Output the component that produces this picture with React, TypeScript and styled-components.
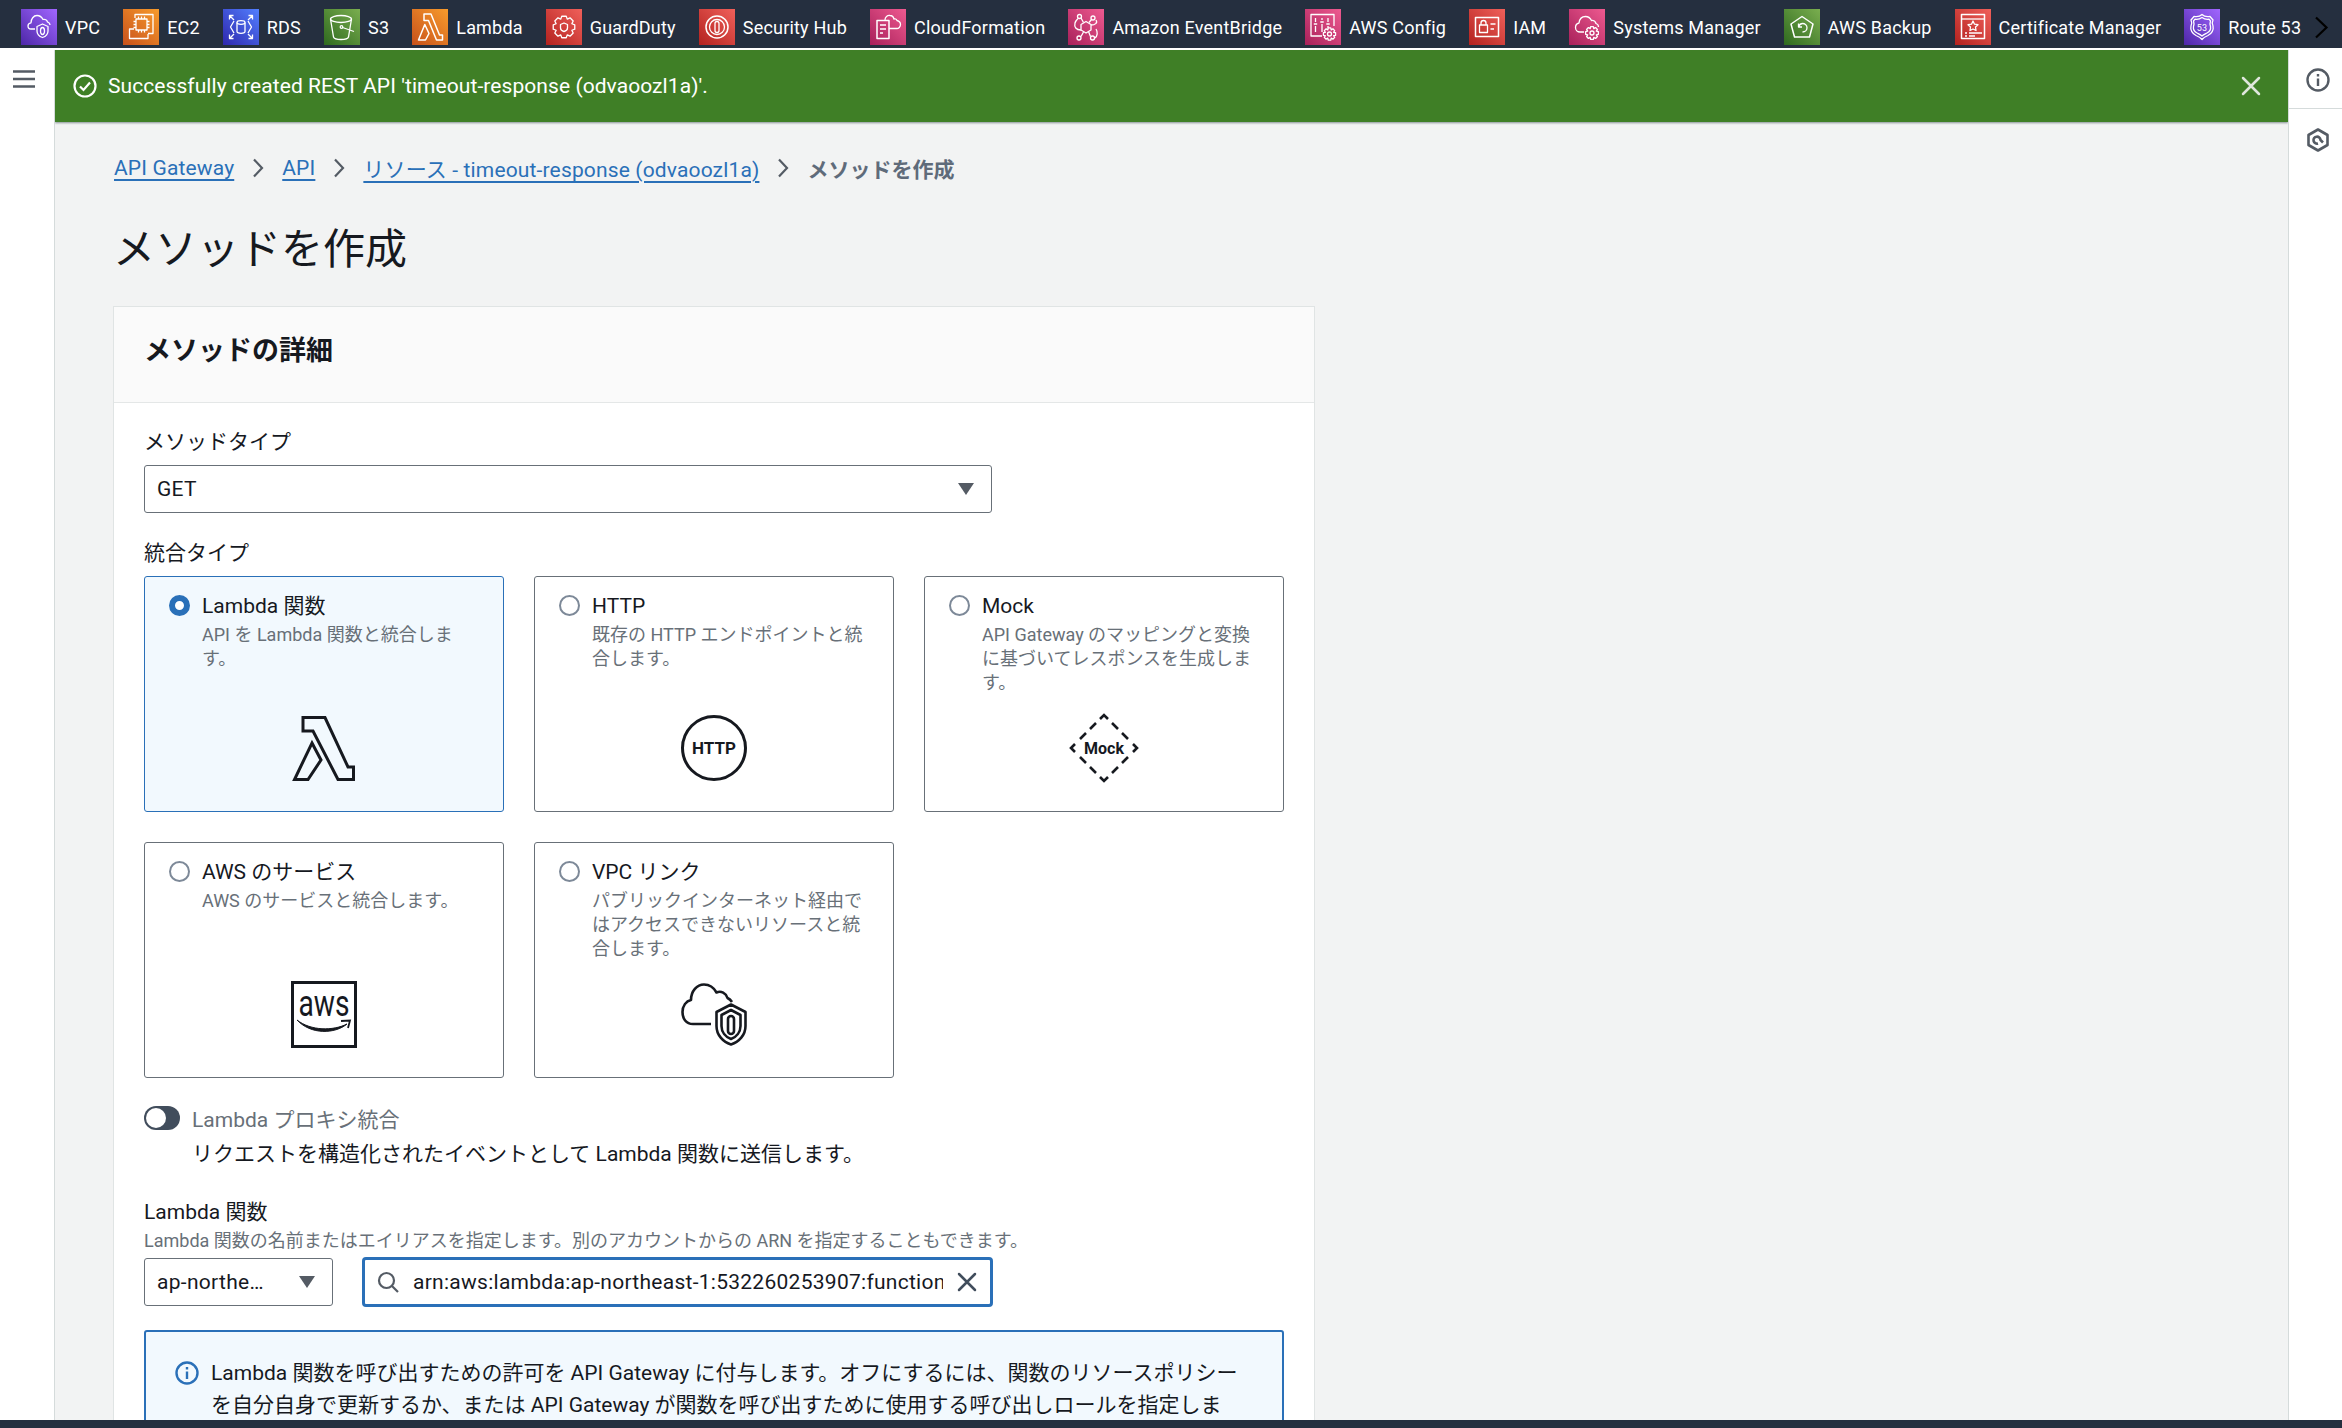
import React from "react";
import styled, { createGlobalStyle } from "styled-components";

const FONT = `Roboto, "Noto Sans CJK JP", sans-serif`;
const BLUE = "#2a70b8";
const INK = "#16191f";
const MUTED = "#687078";

const GlobalStyle = createGlobalStyle`
  html, body {
    margin: 0;
    height: 100%;
    background: #fff;
    overflow: hidden;
    font-family: ${FONT};
    color: ${INK};
  }
  * { box-sizing: border-box; }
`;

const Page = styled.div`
  width: 100%;
  height: 100vh;
  display: flex;
  flex-direction: column;
  overflow: hidden;
`;

const TopBar = styled.nav`
  height: 48px;
  flex-shrink: 0;
  margin-bottom: 2px;
  background: #252f3f;
  display: flex;
  align-items: center;
  padding: 6px 13px 0 21px;
`;

const Shortcuts = styled.div`
  flex: 1;
  display: flex;
  align-items: center;
  gap: 23px;
  overflow: hidden;
`;

const Shortcut = styled.a`
  display: flex;
  align-items: center;
  gap: 8px;
  color: #fff;
  font-size: 18px;
  letter-spacing: 0.2px;
  white-space: nowrap;
`;

const ShortcutIcon = styled.span<{ $from: string; $to: string }>`
  width: 36px;
  height: 36px;
  flex-shrink: 0;
  display: block;
  background: linear-gradient(45deg, ${(p) => p.$from}, ${(p) => p.$to});
  svg { display: block; }
`;

const Body = styled.div`
  flex: 1;
  min-height: 0;
  display: flex;
`;

const LeftRail = styled.aside`
  width: 55px;
  flex-shrink: 0;
  background: #fff;
  border-right: 1px solid #d5dbdb;
  padding: 20px 0 0 13px;
`;

const RightRail = styled.aside`
  width: 54px;
  flex-shrink: 0;
  background: #fff;
  border-left: 1px solid #d5dbdb;
`;

const RailCell = styled.div<{ $height: number; $divided?: boolean }>`
  height: ${(p) => p.$height}px;
  display: flex;
  align-items: center;
  justify-content: center;
  padding: ${(p) => (p.$divided ? 2 : 0)}px 0 0 5px;
  border-bottom: ${(p) => (p.$divided ? "1px solid #d5dbdb" : "none")};
`;

const Main = styled.main`
  flex: 1;
  min-width: 0;
  background: #f2f3f3;
  overflow: hidden;
`;

const Banner = styled.div`
  height: 72px;
  background: #3f7f26;
  color: #fff;
  display: flex;
  align-items: center;
  padding: 0 27px 0 18px;
  gap: 11px;
  font-size: 21px;
  letter-spacing: 0.07px;
  box-shadow: 0 1px 2px rgba(0, 28, 36, 0.45);
`;

const BannerText = styled.span`
  flex: 1;
  margin-top: -1px;
`;

const Content = styled.div`
  padding: 31px 0 0 59px;
`;

const Crumbs = styled.div`
  display: flex;
  align-items: center;
  gap: 18px;
  height: 30px;
  font-size: 21px;
`;

const CrumbLink = styled.a`
  color: ${BLUE};
  letter-spacing: 0.15px;
  text-decoration: underline;
  text-decoration-thickness: 2px;
  text-underline-offset: 4px;
  white-space: nowrap;
`;

const CrumbCurrent = styled.span`
  color: #5f6b7a;
  font-weight: 700;
`;

const PageTitle = styled.h1`
  margin: 37px 0 26px -1px;
  font-size: 42px;
  line-height: 60px;
  font-weight: 400;
`;

const Card = styled.section`
  width: 1202px;
  margin-left: -1px;
  background: #fff;
  border: 1px solid #e0e4e4;
  border-bottom: none;
`;

const CardHeader = styled.header`
  height: 96px;
  background: #fafafa;
  border-bottom: 1px solid #e4e7e7;
  padding: 0 30px 12px;
  display: flex;
  align-items: center;
  font-size: 27px;
  font-weight: 700;
`;

const CardBody = styled.div`
  padding: 24px 30px 0;
`;

const FieldLabel = styled.div<{ $top?: number }>`
  margin-top: ${(p) => p.$top ?? 0}px;
  font-size: 21px;
  line-height: 30px;
`;

const SelectBox = styled.div<{ $width: number; $top?: number }>`
  width: ${(p) => p.$width}px;
  height: 48px;
  margin-top: ${(p) => p.$top ?? 0}px;
  flex-shrink: 0;
  border: 1px solid #687078;
  border-radius: 3px;
  background: #fff;
  display: flex;
  align-items: center;
  justify-content: space-between;
  padding: 0 17px 0 12px;
  font-size: 21px;
`;

const SelectValue = styled.span`
  white-space: nowrap;
  letter-spacing: 0.3px;
`;

const Caret = styled.span`
  width: 0;
  height: 0;
  flex-shrink: 0;
  border-left: 8px solid transparent;
  border-right: 8px solid transparent;
  border-top: 12px solid #545b64;
`;

const TileGrid = styled.div`
  margin-top: 8px;
  display: grid;
  grid-template-columns: repeat(3, 360px);
  grid-auto-rows: 236px;
  gap: 30px;
`;

const Tile = styled.div<{ $selected?: boolean }>`
  position: relative;
  display: flex;
  flex-direction: column;
  padding: 14px 24px 30px 57px;
  border: 1px solid ${(p) => (p.$selected ? BLUE : "#687078")};
  border-radius: 3px;
  background: ${(p) => (p.$selected ? "#f2f9fe" : "#fff")};
`;

const Radio = styled.span<{ $on?: boolean }>`
  position: absolute;
  left: 24px;
  top: 18px;
  width: 21px;
  height: 21px;
  border-radius: 50%;
  background: #fff;
  border: ${(p) => (p.$on ? `6.5px solid ${BLUE}` : "2px solid #7d8998")};
`;

const TileTitle = styled.div`
  font-size: 21px;
  line-height: 30px;
`;

const TileText = styled.div`
  margin-top: 2px;
  font-size: 18px;
  line-height: 24px;
  color: ${MUTED};
`;

const TileArt = styled.div`
  margin: auto 0 0 -33px;
  height: 66px;
  display: flex;
  align-items: center;
  justify-content: center;
  svg { display: block; overflow: visible; }
`;

const ToggleRow = styled.div`
  margin-top: 25px;
  display: flex;
  align-items: center;
  gap: 12px;
  height: 30px;
  font-size: 21px;
  color: ${MUTED};
`;

const ToggleTrack = styled.span`
  width: 36px;
  height: 24px;
  border-radius: 12px;
  background: #414d5c;
  padding: 2px;
  display: block;
`;

const ToggleKnob = styled.span`
  width: 20px;
  height: 20px;
  border-radius: 50%;
  background: #fff;
  display: block;
`;

const ToggleHint = styled.div`
  margin: 6px 0 0 48px;
  font-size: 21px;
  line-height: 30px;
`;

const Helper = styled.div`
  margin-top: 2px;
  font-size: 18px;
  line-height: 24px;
  color: ${MUTED};
`;

const LookupRow = styled.div`
  margin-top: 4px;
  display: flex;
  align-items: center;
  gap: 29px;
`;

const SearchBox = styled.div`
  width: 631px;
  height: 50px;
  border: 3px solid ${BLUE};
  border-radius: 4px;
  background: #fff;
  display: flex;
  align-items: center;
  padding: 0 13px 0 12px;
  gap: 14px;
`;

const SearchInput = styled.input`
  flex: 1;
  min-width: 0;
  border: none;
  outline: none;
  padding: 0;
  background: transparent;
  font-family: ${FONT};
  font-size: 21px;
  letter-spacing: 0.27px;
  color: ${INK};
`;

const Notice = styled.div`
  margin-top: 23px;
  width: 1140px;
  border: 2px solid ${BLUE};
  border-radius: 3px;
  background: #f2f9fe;
  display: flex;
  gap: 12px;
  padding: 25px 30px 0 29px;
  font-size: 21px;
  line-height: 32px;
  svg { flex-shrink: 0; margin-top: 4px; }
`;

const BottomBar = styled.footer`
  height: 8px;
  flex-shrink: 0;
  background: #252f3f;
`;

const gear = (cx: number, cy: number, inner: number, outer: number, teeth: number) => {
  const pts: string[] = [];
  const step = (Math.PI * 2) / teeth;
  for (let i = 0; i < teeth; i++) {
    const a = i * step - Math.PI / 2;
    [
      [-0.5, inner],
      [-0.26, outer],
      [0.26, outer],
      [0.5, inner],
    ].forEach(([o, r]) => {
      const x = cx + Math.cos(a + o * step) * r;
      const y = cy + Math.sin(a + o * step) * r;
      pts.push(`${x.toFixed(2)} ${y.toFixed(2)}`);
    });
  }
  return `M${pts.join("L")}Z`;
};

const Glyph: React.FC<{ children: React.ReactNode }> = ({ children }) => (
  <svg width="36" height="36" viewBox="0 0 36 36" fill="none" stroke="#fff" strokeWidth="1.3" strokeLinejoin="round">
    {children}
  </svg>
);

const PURPLE = ["#4d27a8", "#a166ff"];
const ORANGE = ["#c8511b", "#f79b2c"];
const INDIGO = ["#2e27ad", "#527fff"];
const GREEN = ["#2f6a1f", "#7aae4f"];
const RED = ["#b3221f", "#f0605a"];
const PINK = ["#a8205a", "#ee5a90"];

const shortcuts: { label: string; colors: string[]; art: React.ReactNode }[] = [
  {
    label: "VPC",
    colors: PURPLE,
    art: (
      <>
        <path d="M14 20H10C8 20 7 18.500 7 17C7 15 8.500 14 10 13.800C10 10 12.500 6.500 16 6.500C19 6.500 21 8.500 22 10.500C24 9.800 26 11 26.500 13C28 13.500 29 15 29 16" />
        <path d="M21.500 15L27 17.500V22C27 25 24.500 27.500 21.500 28.500C18.500 27.500 16 25 16 22V17.500Z" />
        <path d="M21.500 18.500C23 18.500 23.500 20 23.500 22C23.500 24 23 25.500 21.500 25.500C20 25.500 19.500 24 19.500 22C19.500 20 20 18.500 21.500 18.500Z" />
      </>
    ),
  },
  {
    label: "EC2",
    colors: ORANGE,
    art: (
      <>
        <path d="M12 9V5.500H30V24.500H25" />
        <path d="M11 20H6.500V29.500H25V25" />
        <rect x="13" y="10" width="11" height="11" />
        <path d="M15.500 7.500V10M18.500 7.500V10M21.500 7.500V10M15.500 21V23.500M18.500 21V23.500M21.500 21V23.500M10.500 12.500H13M10.500 15.500H13M10.500 18.500H13M24 12.500H26.500M24 15.500H26.500M24 18.500H26.500" />
      </>
    ),
  },
  {
    label: "RDS",
    colors: INDIGO,
    art: (
      <>
        <ellipse cx="18" cy="13.500" rx="4" ry="1.800" />
        <path d="M14 13.500V22.500C14 23.500 16 24.300 18 24.300C20 24.300 22 23.500 22 22.500V13.500" />
        <path d="M11 12L7.500 18L11 24M25 12L28.500 18L25 24" />
        <path d="M6.500 10.500V6.500H10.500M6.500 6.500L11 11M29.500 10.500V6.500H25.500M29.500 6.500L25 11M6.500 25.500V29.500H10.500M6.500 29.500L11 25M29.500 25.500V29.500H25.500M29.500 29.500L25 25" />
      </>
    ),
  },
  {
    label: "S3",
    colors: GREEN,
    art: (
      <>
        <ellipse cx="17" cy="10" rx="10.500" ry="3.500" />
        <path d="M6.500 10L9.500 28C10 29.500 13 30.500 17 30.500C21 30.500 24 29.500 24.500 28L27.500 10" />
        <circle cx="17.500" cy="18" r="1.300" />
        <path d="M18.500 18.500L30 22.500" />
      </>
    ),
  },
  {
    label: "Lambda",
    colors: ORANGE,
    art: <path d="M12 5H19L27.500 26H30.500V31H24.500L16.500 11.500H12ZM12.800 15.500L17 24.500L13.500 31H6.500Z" strokeWidth="1.500" />,
  },
  {
    label: "GuardDuty",
    colors: RED,
    art: (
      <>
        <path d={gear(18, 18, 8.500, 11, 8)} strokeLinejoin="round" />
        <path d="M18 14L21.500 15.500V19C21.500 20.500 20 22 18 22.500C16 22 14.500 20.500 14.500 19V15.500Z" />
      </>
    ),
  },
  {
    label: "Security Hub",
    colors: RED,
    art: (
      <>
        <circle cx="18" cy="18" r="11" strokeWidth="1.500" />
        <circle cx="18" cy="18" r="7.500" />
        <rect x="16" y="12.500" width="4" height="11" rx="2" />
      </>
    ),
  },
  {
    label: "CloudFormation",
    colors: PINK,
    art: (
      <>
        <path d="M7 11.500H19V29.500H7Z" strokeWidth="1.500" />
        <path d="M10 16H16M10 20H16M10 24H13" />
        <path d="M15 11C15 8 17.500 6 20 6.500C22 6.500 23.500 8 24 10C25 9.500 26.500 10 27 11.500C29 12 30.500 13.500 30.500 15.500C30.500 18 28.500 19.500 27 19.500H19" />
      </>
    ),
  },
  {
    label: "Amazon EventBridge",
    colors: PINK,
    art: (
      <>
        <path d="M18 12.500L23 15.500V21L18 24L13 21V15.500Z" />
        <circle cx="11.500" cy="7.500" r="2" />
        <circle cx="25" cy="9" r="2" />
        <circle cx="11" cy="29" r="2" />
        <circle cx="24.500" cy="29" r="2" />
        <path d="M13 9L15.500 13.500M23.500 10.500L21 13.500M23 16C27 16 30 14 28 11M13 21C8 21 6 18 7 14C7.500 12 8.500 11 10 9.500M13 27.500L15.500 23M22.500 27.500L20.500 22.500M27 29C29.500 27 30 23 28 20" />
      </>
    ),
  },
  {
    label: "AWS Config",
    colors: PINK,
    art: (
      <>
        <path d="M17 27H6V5.500H29V17" />
        <path d="M10.500 9V13M10.500 17V23M17 9V11M17 15V23M23 9V13M23 17V19" />
        <path d="M8.800 15H12.200M15.300 13H18.700M21.300 15H24.700" />
        <path d={gear(24.500, 25, 4.500, 6.200, 8)} />
        <circle cx="24.500" cy="25" r="2" />
      </>
    ),
  },
  {
    label: "IAM",
    colors: RED,
    art: (
      <>
        <rect x="6.500" y="8.500" width="23" height="19" strokeWidth="1.500" />
        <rect x="10.500" y="16" width="8" height="7.500" />
        <path d="M12 16V14C12 12.500 13 11.500 14.500 11.500C16 11.500 17 12.500 17 14V16" />
        <path d="M21.500 15H26.500M21.500 20H25" strokeWidth="1.500" />
      </>
    ),
  },
  {
    label: "Systems Manager",
    colors: PINK,
    art: (
      <>
        <path d="M15 23H11C8.500 23 6.500 21 6.500 18.500C6.500 16 8 14.500 10 14C10.500 10 13 7.500 16.500 7.500C19.500 7.500 21.500 9.500 22.500 11.500C24.500 11 26.500 12.500 27 14.500C28.500 15 29.500 16 29.500 18" />
        <path d={gear(23, 24, 4.700, 6.500, 8)} />
        <circle cx="23" cy="24" r="2" />
      </>
    ),
  },
  {
    label: "AWS Backup",
    colors: GREEN,
    art: (
      <>
        <path d="M18 7.500L29 15L25.500 28H10.500L7 15Z" strokeWidth="1.500" />
        <path d="M14.500 14.500V18H18M14.800 17.500C15.500 15.500 17 14.500 18.500 14.500C21 14.500 23 16.500 23 18.800C23 21.200 21 23 18.500 23" />
      </>
    ),
  },
  {
    label: "Certificate Manager",
    colors: RED,
    art: (
      <>
        <path d="M6.500 5.500H29.500V29.500H6.500Z" strokeWidth="1.500" />
        <path d="M6.500 10H29.500" />
        <path d="M18 12L19.500 15.200L23 15.700L20.500 18L21 21.500L18 20L15 21.500L15.500 18L13 15.700L16.500 15.200Z" />
        <path d="M14 24H27M10 24H12M10 27H12M14 27H20" />
      </>
    ),
  },
  {
    label: "Route 53",
    colors: PURPLE,
    art: (
      <>
        <path d="M18 5.500C20 7.500 23 8 26 7.500L29 11C28 13 28 15 29 17C30 21 27.500 25 24 26.500C21.500 27.500 19.500 28.500 18 30.500C16.500 28.500 14.500 27.500 12 26.500C8.500 25 6 21 7 17C8 15 8 13 7 11L10 7.500C13 8 16 7.500 18 5.500Z" />
        <path d="M18 8.500C20 10 23 10.500 25 10.200L26.500 12C25.800 14 25.800 15.500 26.500 17.500C27 20.500 25 23 23 24C21 25 19.500 25.500 18 27C16.500 25.500 15 25 13 24C11 23 9 20.500 9.500 17.500C10.200 15.500 10.200 14 9.500 12L11 10.200C13 10.500 16 10 18 8.500Z" />
        <text x="18" y="21.500" textAnchor="middle" fontSize="9" fontFamily={FONT} fill="#fff" stroke="none">53</text>
      </>
    ),
  },
];

const LambdaArt = () => (
  <svg width="62" height="65" viewBox="0 0 62 65" fill="none" stroke={INK} strokeWidth="3" strokeLinejoin="miter">
    <path d="M10 1.500H32L55 51H60.500V63.500H45L20 15H10Z" />
    <path d="M19 27L28 44L15 63.500H1.500Z" />
  </svg>
);

const HttpArt = () => (
  <svg width="66" height="66" viewBox="0 0 66 66" fill="none">
    <circle cx="33" cy="33" r="31.500" stroke={INK} strokeWidth="3" />
    <text x="33" y="39" textAnchor="middle" fontSize="17" fontWeight="700" fontFamily={FONT} fill={INK}>HTTP</text>
  </svg>
);

const MockArt = () => (
  <svg width="66" height="66" viewBox="-33 -33 66 66" fill="none" stroke={INK} strokeWidth="2.600">
    <path d="M-4 -29L0 -33L4 -29M-4 29L0 33L4 29M-29 -4L-33 0L-29 4M29 -4L33 0L29 4" />
    <path d="M8 -25L14 -19M18 -15L24 -9M8 25L14 19M18 15L24 9M-8 -25L-14 -19M-18 -15L-24 -9M-8 25L-14 19M-18 15L-24 9" />
    <text x="0" y="6" textAnchor="middle" fontSize="16" fontWeight="700" fontFamily={FONT} fill={INK} stroke="none">Mock</text>
  </svg>
);

const AwsArt = () => (
  <svg width="66" height="67" viewBox="0 0 66 67" fill="none">
    <rect x="1.500" y="1.500" width="63" height="64" stroke={INK} strokeWidth="3" />
    <text x="33" y="35" textAnchor="middle" fontSize="36" fontFamily={FONT} fill={INK} textLength="51" lengthAdjust="spacingAndGlyphs">aws</text>
    <path d="M6 39C20 50 42 50 56 43C44 53 20 54 6 39Z" fill={INK} stroke={INK} strokeWidth="1" />
    <path d="M50 40L59 39.500L57 47" stroke={INK} strokeWidth="1.800" />
  </svg>
);

const VpcLinkArt = () => (
  <svg width="66" height="63" viewBox="0 0 66 63" fill="none" stroke={INK} strokeWidth="2.600" strokeLinejoin="round">
    <path d="M30 41H12C5 41 1.500 35.500 1.500 29C1.500 23 5 18 10 17C10 8 16 1.500 23 1.500C29 1.500 33 5 35.500 9.500C40 7.500 45 10 46.500 15C48.500 16 50 17.500 51 19" />
    <path d="M50 21.500L64.500 29V43C64.500 52 58 59 50 61.500C42 59 35.500 52 35.500 43V29Z" />
    <path d="M50 27L59.500 32V43C59.500 49 55.500 54 50 56C44.500 54 40.500 49 40.500 43V32Z" />
    <rect x="47" y="33" width="6" height="18" rx="3" />
  </svg>
);

const XMark = ({ color, size }: { color: string; size: number }) => (
  <svg width={size} height={size} viewBox="0 0 20 20" fill="none" stroke={color} strokeWidth="2.500" strokeLinecap="round" style={{ flexShrink: 0 }}>
    <path d="M2 2L18 18M18 2L2 18" />
  </svg>
);

const tiles: { title: string; text: string; art: React.ReactNode; selected?: boolean }[] = [
  { title: "Lambda 関数", text: "API を Lambda 関数と統合します。", art: <LambdaArt />, selected: true },
  { title: "HTTP", text: "既存の HTTP エンドポイントと統合します。", art: <HttpArt /> },
  { title: "Mock", text: "API Gateway のマッピングと変換に基づいてレスポンスを生成します。", art: <MockArt /> },
  { title: "AWS のサービス", text: "AWS のサービスと統合します。", art: <AwsArt /> },
  { title: "VPC リンク", text: "パブリックインターネット経由ではアクセスできないリソースと統合します。", art: <VpcLinkArt /> },
];

const CrumbChevron = () => (
  <svg width="12" height="20" viewBox="0 0 12 20" fill="none" stroke="#545b64" strokeWidth="2.200" style={{ flexShrink: 0 }}>
    <path d="M2 1.500L10 10L2 18.500" />
  </svg>
);

export default function App() {
  return (
    <Page>
      <GlobalStyle />
      <TopBar>
        <Shortcuts>
          {shortcuts.map((s) => (
            <Shortcut key={s.label}>
              <ShortcutIcon $from={s.colors[0]} $to={s.colors[1]}>
                <Glyph>{s.art}</Glyph>
              </ShortcutIcon>
              {s.label}
            </Shortcut>
          ))}
        </Shortcuts>
        <svg width="15" height="23" viewBox="0 0 15 23" fill="none" stroke="#000" strokeWidth="2.200">
          <path d="M2 1.500L12.500 11.500L2 21.500" />
        </svg>
      </TopBar>
      <Body>
        <LeftRail>
          <svg width="22" height="18" viewBox="0 0 22 18" fill="none" stroke="#545b64" strokeWidth="2.500">
            <path d="M0 1.500H22M0 9H22M0 16.500H22" />
          </svg>
        </LeftRail>
        <Main>
          <Banner>
            <svg width="24" height="24" viewBox="0 0 24 24" fill="none" stroke="#fff" strokeWidth="2.200">
              <circle cx="12" cy="12" r="10.500" />
              <path d="M7 12.500L10.500 16L17 8.500" />
            </svg>
            <BannerText>Successfully created REST API 'timeout-response (odvaoozl1a)'.</BannerText>
            <XMark color="#dfe6dc" size={20} />
          </Banner>
          <Content>
            <Crumbs>
              <CrumbLink>API Gateway</CrumbLink>
              <CrumbChevron />
              <CrumbLink>API</CrumbLink>
              <CrumbChevron />
              <CrumbLink>リソース - timeout-response (odvaoozl1a)</CrumbLink>
              <CrumbChevron />
              <CrumbCurrent>メソッドを作成</CrumbCurrent>
            </Crumbs>
            <PageTitle>メソッドを作成</PageTitle>
            <Card>
              <CardHeader>メソッドの詳細</CardHeader>
              <CardBody>
                <FieldLabel>メソッドタイプ</FieldLabel>
                <SelectBox $width={848} $top={8}>
                  <SelectValue>GET</SelectValue>
                  <Caret />
                </SelectBox>
                <FieldLabel $top={25}>統合タイプ</FieldLabel>
                <TileGrid>
                  {tiles.map((t) => (
                    <Tile key={t.title} $selected={t.selected}>
                      <Radio $on={t.selected} />
                      <TileTitle>{t.title}</TileTitle>
                      <TileText>{t.text}</TileText>
                      <TileArt>{t.art}</TileArt>
                    </Tile>
                  ))}
                </TileGrid>
                <ToggleRow>
                  <ToggleTrack>
                    <ToggleKnob />
                  </ToggleTrack>
                  Lambda プロキシ統合
                </ToggleRow>
                <ToggleHint>リクエストを構造化されたイベントとして Lambda 関数に送信します。</ToggleHint>
                <FieldLabel $top={28}>Lambda 関数</FieldLabel>
                <Helper>Lambda 関数の名前またはエイリアスを指定します。別のアカウントからの ARN を指定することもできます。</Helper>
                <LookupRow>
                  <SelectBox $width={189}>
                    <SelectValue>ap-northe…</SelectValue>
                    <Caret />
                  </SelectBox>
                  <SearchBox>
                    <svg width="22" height="22" viewBox="0 0 22 22" fill="none" stroke="#545b64" strokeWidth="2.200" style={{ flexShrink: 0 }}>
                      <circle cx="9.500" cy="9.500" r="7.500" />
                      <path d="M15 15L21 21" />
                    </svg>
                    <SearchInput readOnly value="arn:aws:lambda:ap-northeast-1:532260253907:function:timeout-response" />
                    <XMark color="#414d5c" size={20} />
                  </SearchBox>
                </LookupRow>
                <Notice>
                  <svg width="24" height="24" viewBox="0 0 24 24" fill="none" stroke={BLUE} strokeWidth="2.400">
                    <circle cx="12" cy="12" r="10.500" />
                    <path d="M12 10.500V18" />
                    <path d="M12 6V8.500" />
                  </svg>
                  <span>
                    Lambda 関数を呼び出すための許可を API Gateway に付与します。オフにするには、関数のリソースポリシーを自分自身で更新するか、または API Gateway が関数を呼び出すために使用する呼び出しロールを指定します。
                  </span>
                </Notice>
              </CardBody>
            </Card>
          </Content>
        </Main>
        <RightRail>
          <RailCell $height={59} $divided>
            <svg width="24" height="24" viewBox="0 0 24 24" fill="none" stroke="#545b64" strokeWidth="2.400">
              <circle cx="12" cy="12" r="10.500" />
              <path d="M12 10.500V18M12 6V8.500" />
            </svg>
          </RailCell>
          <RailCell $height={62}>
            <svg width="24" height="24" viewBox="0 0 24 24" fill="none" stroke="#545b64" strokeWidth="2.600" strokeLinejoin="round">
              <path d="M12 1.500L21.500 7V17L12 22.500L2.500 17V7Z" />
              <path d="M17 14.500L14.500 12A3.500 3.500 0 1 0 12 15.500" />
            </svg>
          </RailCell>
        </RightRail>
      </Body>
      <BottomBar />
    </Page>
  );
}
